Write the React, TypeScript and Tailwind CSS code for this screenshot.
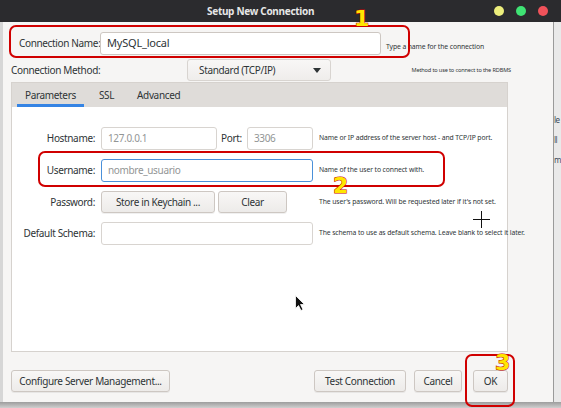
const font = { fontFamily: '"Noto Sans", "Open Sans", sans-serif' }

function Input({ value, placeholder, className }: { value?: string; placeholder?: string; className?: string }) {
  return (
    <div className={`flex h-[23px] items-center rounded-[3px] border bg-white px-[6px] ${className ?? 'border-[#cdc7c2]'}`}>
      {value ? (
        <span className="text-[11px] tracking-[-0.2px] text-[#2e3436]">{value}</span>
      ) : (
        <span className="text-[10px] text-[#929595]">{placeholder}</span>
      )}
    </div>
  )
}

function Button({ children, className }: { children: React.ReactNode; className?: string }) {
  return (
    <div
      className={`flex h-[22px] items-center justify-center whitespace-nowrap rounded-[3px] border border-[#cdc7c2] bg-gradient-to-b from-[#f8f7f6] to-[#edebe9] text-[10px] text-[#2e3436] shadow-[0_1px_0_rgba(0,0,0,0.06)] ${className ?? ''}`}
    >
      {children}
    </div>
  )
}

function Help({ children }: { children: React.ReactNode }) {
  return <span className="text-[6.8px] leading-none tracking-[-0.1px] text-[#2e3436] whitespace-nowrap">{children}</span>
}

function Marker({ n, className }: { n: string; className: string }) {
  return (
    <span
      className={`absolute text-[22px] font-bold leading-none text-[#ffe600] [-webkit-text-stroke:1px_#c40000] [paint-order:stroke_fill] ${className}`}
      style={{ fontFamily: '"DejaVu Sans", sans-serif' }}
    >
      {n}
    </span>
  )
}

export default function App() {
  return (
    <div className="relative h-[408px] w-[561px] overflow-hidden bg-[#b8b8b8] tracking-[-0.35px]" style={font}>
      {/* title bar */}
      <div className="flex h-[22px] items-center bg-[#2b2b2e]">
        <span className="ml-[207px] text-[10px] font-bold tracking-[-0.3px] text-[#e6e6e6]">Setup New Connection</span>
        <div className="ml-auto mr-[13px] flex items-center gap-[12px]">
          <span className="h-[10px] w-[10px] rounded-full bg-[#ecee7c]" />
          <span className="h-[10px] w-[10px] rounded-full bg-[#3fe374]" />
          <span className="h-[10px] w-[10px] rounded-full bg-[#f0525a]" />
        </div>
      </div>

      <div className="flex h-[380px]">
        {/* left sliver of the window behind */}
        <div className="w-[3px] bg-[#d6d6d6]" />

        {/* dialog body */}
        <div className="flex w-[550px] flex-col bg-[#f6f5f4] text-[#2e3436]">
          <div className="mt-[9px] flex items-center pl-[16px]">
            <span className="w-[81px] whitespace-nowrap text-[10px]">Connection Name:</span>
            <Input value="MySQL_local" className="w-[281px] border-[#cdc7c2]" />
            <span className="ml-[5px]">
              <Help>Type a name for the connection</Help>
            </span>
          </div>

          <div className="mt-[4px] flex items-center pl-[8px]">
            <span className="w-[176px] whitespace-nowrap text-[10px]">Connection Method:</span>
            <div className="flex h-[22px] w-[144px] items-center justify-between rounded-[3px] border border-[#d8d4d0] bg-gradient-to-b from-[#f8f7f6] to-[#efedeb] pl-[11px] pr-[9px]">
              <span className="whitespace-nowrap text-[10px]">Standard (TCP/IP)</span>
              <svg width="8" height="5" viewBox="0 0 8 5">
                <path d="M0 0h8L4 5z" fill="#2e3436" />
              </svg>
            </div>
            <span className="ml-auto mr-[42px] whitespace-nowrap text-[5.6px] tracking-[-0.15px]">Method to use to connect to the RDBMS</span>
          </div>

          {/* tab view */}
          <div className="ml-[8px] mt-px flex h-[270px] w-[497px] flex-col border border-[#d6d2ce]">
            <div className="flex h-[24px] gap-[7px] bg-[#dfdcd9] pl-[5px] text-[10px]">
              <div className="flex items-center border-b-[3px] border-[#3584e4] px-[8px] pt-[3px]">Parameters</div>
              <div className="flex items-center px-[8px]">SSL</div>
              <div className="flex items-center px-[8px]">Advanced</div>
            </div>
            <div className="flex-1 bg-white pt-[20px]">
              <div className="grid grid-cols-[83px_212px_1fr] items-center gap-x-[6px] gap-y-[9px] text-[10px]">
                <span className="whitespace-nowrap text-right">Hostname:</span>
                <div className="flex items-center">
                  <Input placeholder="127.0.0.1" className="w-[116px] border-[#d8d4d0]" />
                  <span className="ml-[4px] w-[26px]">Port:</span>
                  <Input placeholder="3306" className="w-[66px] border-[#d8d4d0]" />
                </div>
                <Help>Name or IP address of the server host - and TCP/IP port.</Help>

                <span className="whitespace-nowrap text-right">Username:</span>
                <Input placeholder="nombre_usuario" className="border-[#4a90d9]" />
                <Help>Name of the user to connect with.</Help>

                <span className="whitespace-nowrap text-right">Password:</span>
                <div className="flex gap-[3px]">
                  <Button className="w-[114px]">Store in Keychain ...</Button>
                  <Button className="w-[69px]">Clear</Button>
                </div>
                <Help>The user's password. Will be requested later if it's not set.</Help>

                <span className="whitespace-nowrap text-right">Default Schema:</span>
                <Input className="border-[#d8d4d0]" />
                <Help>The schema to use as default schema. Leave blank to select it later.</Help>
              </div>
            </div>
          </div>

          <div className="mt-[18px] flex items-center pl-[8px] pr-[45px]">
            <Button className="w-[159px]">Configure Server Management...</Button>
            <Button className="ml-auto w-[92px]">Test Connection</Button>
            <Button className="ml-[8px] w-[48px]">Cancel</Button>
            <Button className="ml-[11px] w-[35px]">OK</Button>
          </div>
        </div>

        {/* window behind, right side */}
        <div className="flex-1 overflow-hidden border-l border-[#9a9a9a] bg-[#e9e9e9] pt-[88px] text-[8px] leading-[20px] tracking-[-0.5px] text-[#3c4a5a]">
          <div className="whitespace-nowrap">le</div>
          <div className="whitespace-nowrap">ll</div>
          <div className="whitespace-nowrap">m</div>
        </div>
      </div>

      <div className="h-[6px] bg-gradient-to-b from-[#9d9d9d] to-[#cfcfcf]" />

      {/* annotations */}
      <div className="absolute left-[9px] top-[25px] h-[33px] w-[401px] rounded-[7px] border-2 border-[#d00000]" />
      <div className="absolute left-[38px] top-[151px] h-[36px] w-[407px] rounded-[7px] border-2 border-[#d00000]" />
      <div className="absolute left-[465px] top-[354px] h-[53px] w-[50px] rounded-[7px] border-2 border-[#d00000]" />
      <Marker n="1" className="left-[354px] top-[8px]" />
      <Marker n="2" className="left-[333px] top-[175px]" />
      <Marker n="3" className="left-[495px] top-[352px]" />

      {/* crosshair cursor */}
      <svg className="absolute left-[473px] top-[211px]" width="17" height="17" viewBox="0 0 17 17">
        <path d="M8.5 0v17M0 8.5h17" stroke="#111" strokeWidth="1" />
      </svg>
      {/* arrow cursor */}
      <svg className="absolute left-[295px] top-[295px]" width="11" height="16" viewBox="0 0 11 16">
        <path d="M0.5 0.5v13l3-3 2.5 5 2-1-2.5-5h4z" fill="#111" stroke="#fff" strokeWidth="0.8" />
      </svg>
    </div>
  )
}
